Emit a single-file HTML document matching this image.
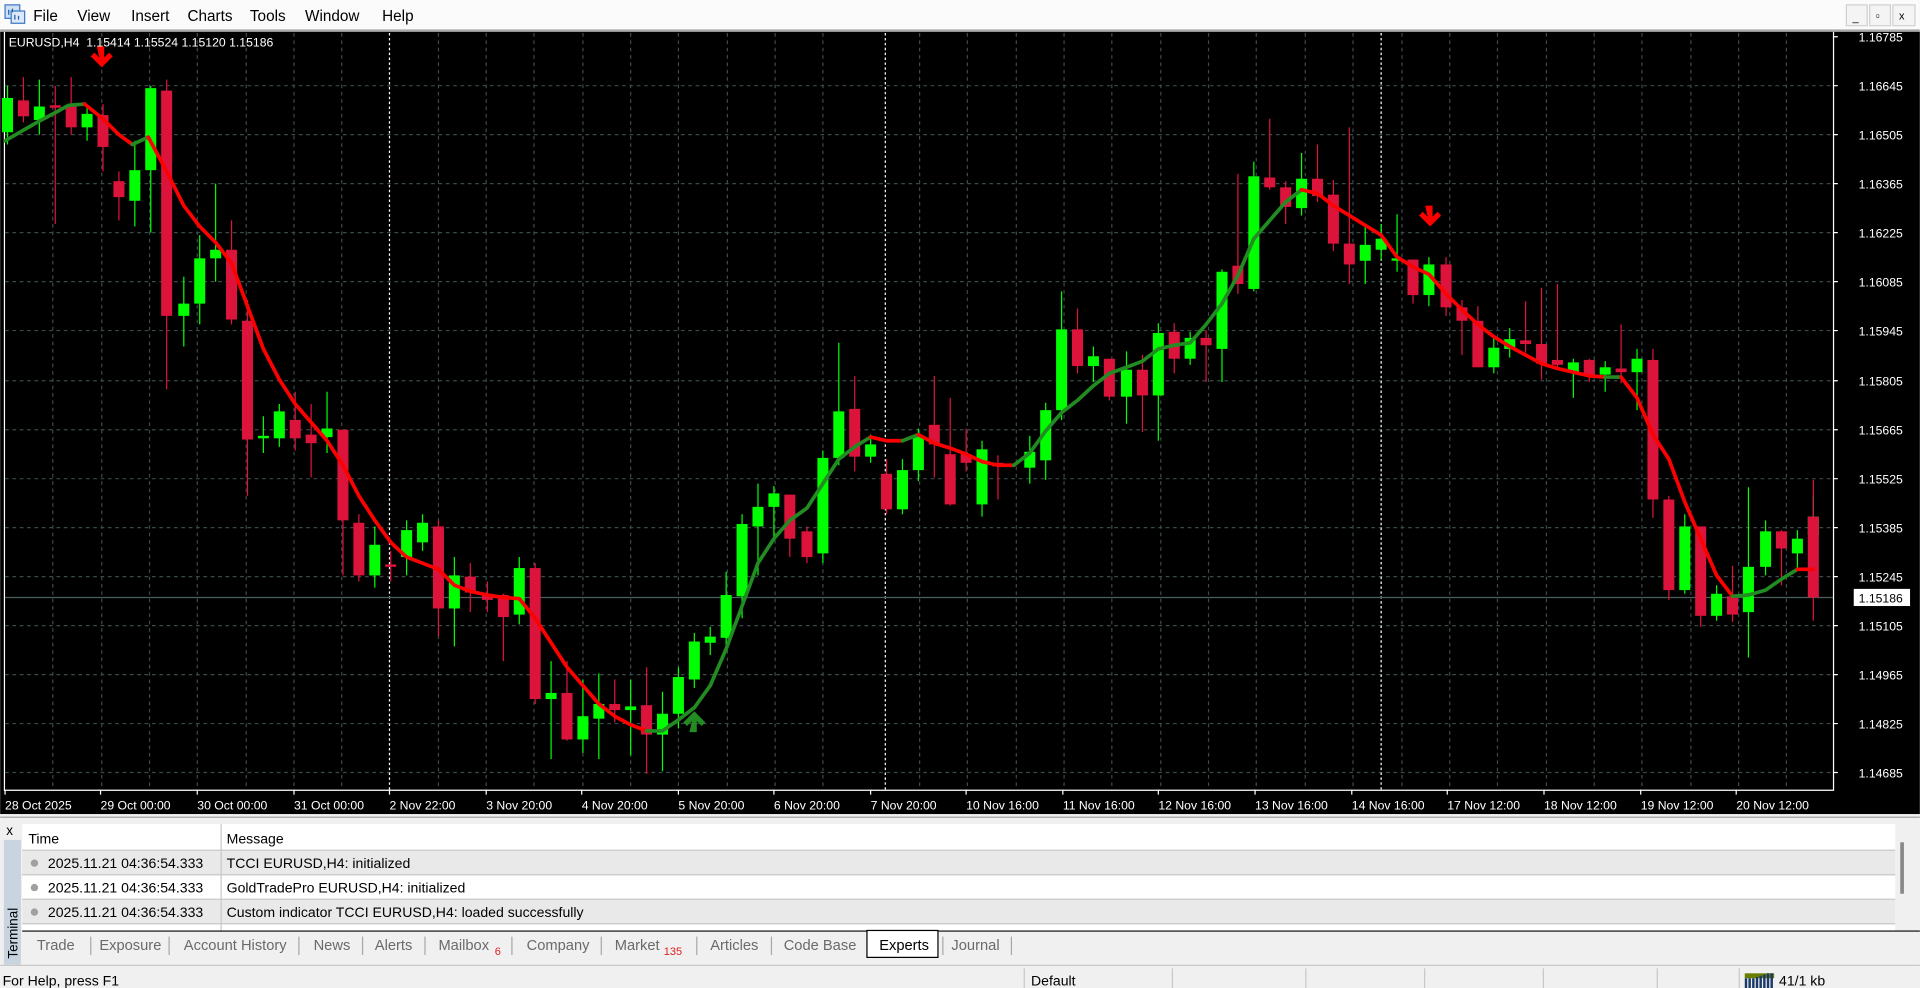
<!DOCTYPE html>
<html><head><meta charset="utf-8"><style>
html,body{margin:0;padding:0;background:#f0f0f0;overflow:hidden}
svg{display:block}
text{font-family:"Liberation Sans",sans-serif}
</style></head><body>
<svg width="1920" height="988" viewBox="0 0 1568 807" xmlns="http://www.w3.org/2000/svg">
<!-- menu bar -->
<rect x="0" y="0" width="1568" height="25" fill="#fbfbfb"/>
<rect x="0" y="24" width="1568" height="2" fill="#a8a8a8"/>
<g>
<rect x="4" y="4" width="12" height="11" fill="#cfe0f4" stroke="#3b78c4" stroke-width="1"/>
<rect x="9" y="9" width="11" height="10" fill="#dbe8f7" stroke="#3b78c4" stroke-width="1"/>
<path d="M7 8v4M10 7v3M12 12v4M15 13v3" stroke="#1f5fae" stroke-width="1"/>
</g>
<g font-size="12.5" fill="#000">
<text x="27" y="17">File</text><text x="63" y="17">View</text><text x="107" y="17">Insert</text>
<text x="153" y="17">Charts</text><text x="204" y="17">Tools</text><text x="249" y="17">Window</text><text x="312" y="17">Help</text>
</g>
<g fill="#f4f4f4" stroke="#d0d0d0">
<rect x="1508" y="4" width="17" height="17"/><rect x="1527" y="4" width="17" height="17"/><rect x="1546" y="4" width="18" height="17"/>
</g>
<g font-size="9" fill="#000"><text x="1513" y="17">_</text><text x="1532" y="16">▫</text><text x="1551" y="16">x</text></g>

<!-- chart -->
<rect x="0" y="26" width="1568" height="639" fill="#000"/>
<!-- grid -->
<g stroke="#3a4a4a" stroke-width="1" stroke-dasharray="3,3">
<path d="M4 70H1497M4 110H1497M4 150H1497M4 190H1497M4 230H1497M4 270H1497M4 311H1497M4 351H1497M4 391H1497M4 431H1497M4 471H1497M4 511H1497M4 551H1497M4 591H1497M4 631H1497"/>
<path d="M43 27V645M83 27V645M122 27V645M161 27V645M201 27V645M240 27V645M279 27V645M358 27V645M397 27V645M436 27V645M476 27V645M515 27V645M554 27V645M594 27V645M633 27V645M672 27V645M751 27V645M790 27V645M830 27V645M869 27V645M908 27V645M948 27V645M987 27V645M1026 27V645M1066 27V645M1105 27V645M1145 27V645M1184 27V645M1223 27V645M1263 27V645M1302 27V645M1341 27V645M1381 27V645M1420 27V645M1459 27V645"/>
</g>
<g stroke="#fff" stroke-width="1" stroke-dasharray="2,2"><path d="M318 27V645M723 27V645M1128 27V645"/></g>
<path d="M4 488H1497" stroke="#4a5e5e" stroke-width="1"/>
<!-- frame -->
<path d="M3.5 26V645.5H1497.5V26" fill="none" stroke="#fff" stroke-width="1"/>
<g stroke="#fff"><path d="M4 645v4M82 645v4M161 645v4M240 645v4M318 645v4M397 645v4M475 645v4M554 645v4M632 645v4M711 645v4M789 645v4M868 645v4M946 645v4M1025 645v4M1104 645v4M1182 645v4M1261 645v4M1340 645v4M1418 645v4"/>
<path d="M1497 30h4M1497 70h4M1497 110h4M1497 150h4M1497 190h4M1497 230h4M1497 270h4M1497 311h4M1497 351h4M1497 391h4M1497 431h4M1497 471h4M1497 511h4M1497 551h4M1497 591h4M1497 631h4"/></g>

<!-- wicks -->
<path stroke="#00ff00" stroke-width="1" d="M6 70V118M32 65V110M71 88V115M110 115V185M123 70V190M150 226V283M163 192V265M176 150V230M215 340V370M228 330V365M267 320V370M306 430V480M332 425V470M345 420V450M371 455V528M424 455V510M450 540V620M476 555V615M489 550V620M515 555V617M541 565V630M554 545V595M567 517V562M580 512V535M593 467V530M606 420V505M619 395V470M632 397V440M672 368V460M685 280V380M711 355V378M737 375V420M750 350V393M802 360V422M841 356V395M854 329V392M867 238V343M893 283V312M920 287V346M946 264V360M972 271V298M998 220V312M1024 132V238M1063 125V176M1115 185V232M1128 183V212M1141 175V222M1167 210V250M1220 275V305M1233 268V292M1285 293V325M1311 295V320M1337 285V335M1376 420V485M1402 478V507M1428 398V537M1442 425V470M1468 433V465M1481 405V445"/>
<path stroke="#dc143c" stroke-width="1" d="M19 63V100M45 70V183M58 63V110M84 85V140M97 140V180M136 65V318M189 180V265M202 245V405M241 320V368M254 330V390M280 351V470M293 420V475M319 450V475M358 425V520M384 460V500M398 475V500M411 485V540M437 460V575M463 540V605M502 555V590M528 545V632M645 404V455M659 430V460M698 307V385M724 375V420M763 307V390M776 325V413M789 350V385M815 372V408M880 252V305M906 294V327M933 290V353M959 264V305M985 270V312M1011 142V240M1037 97V155M1050 148V183M1076 118V165M1089 147V205M1102 104V232M1154 212V248M1181 210V258M1194 245V290M1207 250V300M1246 246V288M1259 235V310M1272 232V300M1298 293V312M1324 265V313M1350 285V423M1363 405V490M1389 430V512M1415 462V508M1455 433V478M1481 392V507"/>
<!-- green bodies -->
<g fill="#00ff00">
<rect x="1.5" y="80" width="9" height="28"/><rect x="27.5" y="87" width="9" height="11"/><rect x="66.5" y="93" width="9" height="11"/><rect x="105.5" y="139" width="9" height="25"/><rect x="118.5" y="72" width="9" height="67"/>
<rect x="145.5" y="248" width="9" height="10"/><rect x="158.5" y="211" width="9" height="37"/><rect x="171.5" y="204" width="9" height="7"/><rect x="210.5" y="356" width="9" height="2"/><rect x="223.5" y="336" width="9" height="22"/>
<rect x="262.5" y="350" width="9" height="7"/><rect x="301.5" y="445" width="9" height="25"/><rect x="327.5" y="433" width="9" height="22"/><rect x="340.5" y="427" width="9" height="16"/><rect x="366.5" y="470" width="9" height="27"/>
<rect x="419.5" y="464" width="9" height="38"/><rect x="445.5" y="566" width="9" height="5"/><rect x="471.5" y="585" width="9" height="19"/><rect x="484.5" y="575" width="9" height="12"/><rect x="510.5" y="577" width="9" height="3"/>
<rect x="536.5" y="583" width="9" height="17"/><rect x="549.5" y="553" width="9" height="30"/><rect x="562.5" y="524" width="9" height="31"/><rect x="575.5" y="520" width="9" height="5"/><rect x="588.5" y="486" width="9" height="35"/>
<rect x="601.5" y="428" width="9" height="59"/><rect x="614.5" y="414" width="9" height="16"/><rect x="627.5" y="403" width="9" height="11"/><rect x="667.5" y="374" width="9" height="78"/><rect x="680.5" y="336" width="9" height="38"/>
<rect x="706.5" y="363" width="9" height="10"/><rect x="732.5" y="384" width="9" height="32"/><rect x="745.5" y="357" width="9" height="27"/><rect x="797.5" y="367" width="9" height="45"/><rect x="836.5" y="369" width="9" height="13"/>
<rect x="849.5" y="335" width="9" height="41"/><rect x="862.5" y="269" width="9" height="66"/><rect x="888.5" y="291" width="9" height="8"/><rect x="915.5" y="302" width="9" height="22"/><rect x="941.5" y="272" width="9" height="51"/>
<rect x="967.5" y="276" width="9" height="17"/><rect x="993.5" y="222" width="9" height="63"/><rect x="1019.5" y="144" width="9" height="92"/><rect x="1058.5" y="146" width="9" height="24"/><rect x="1110.5" y="200" width="9" height="13"/>
<rect x="1123.5" y="195" width="9" height="9"/><rect x="1136.5" y="211" width="9" height="2"/><rect x="1162.5" y="216" width="9" height="25"/><rect x="1215.5" y="284" width="9" height="16"/><rect x="1228.5" y="277" width="9" height="8"/>
<rect x="1280.5" y="296" width="9" height="8"/><rect x="1306.5" y="300" width="9" height="6"/><rect x="1332.5" y="293" width="9" height="11"/><rect x="1371.5" y="430" width="9" height="52"/><rect x="1397.5" y="485" width="9" height="18"/>
<rect x="1423.5" y="463" width="9" height="37"/><rect x="1437.5" y="434" width="9" height="29"/><rect x="1463.5" y="440" width="9" height="12"/><rect x="1476.5" y="422" width="9" height="15"/>
</g>
<!-- red bodies -->
<g fill="#dc143c">
<rect x="14.5" y="82" width="9" height="13"/><rect x="40.5" y="86" width="9" height="2"/><rect x="53.5" y="86" width="9" height="18"/><rect x="79.5" y="94" width="9" height="26"/><rect x="92.5" y="148" width="9" height="13"/>
<rect x="131.5" y="74" width="9" height="184"/><rect x="184.5" y="204" width="9" height="57"/><rect x="197.5" y="262" width="9" height="97"/><rect x="236.5" y="343" width="9" height="15"/><rect x="249.5" y="355" width="9" height="7"/>
<rect x="275.5" y="351" width="9" height="74"/><rect x="288.5" y="427" width="9" height="43"/><rect x="314.5" y="461" width="9" height="2"/><rect x="353.5" y="430" width="9" height="67"/><rect x="379.5" y="471" width="9" height="13"/>
<rect x="393.5" y="485" width="9" height="5"/><rect x="406.5" y="486" width="9" height="18"/><rect x="432.5" y="464" width="9" height="107"/><rect x="458.5" y="566" width="9" height="38"/><rect x="497.5" y="575" width="9" height="5"/>
<rect x="523.5" y="576" width="9" height="24"/><rect x="640.5" y="404" width="9" height="36"/><rect x="654.5" y="434" width="9" height="21"/><rect x="693.5" y="334" width="9" height="39"/><rect x="719.5" y="387" width="9" height="29"/>
<rect x="758.5" y="347" width="9" height="16"/><rect x="771.5" y="371" width="9" height="41"/><rect x="784.5" y="371" width="9" height="7"/><rect x="810.5" y="378" width="9" height="3"/><rect x="875.5" y="269" width="9" height="30"/>
<rect x="901.5" y="293" width="9" height="31"/><rect x="928.5" y="302" width="9" height="21"/><rect x="954.5" y="271" width="9" height="22"/><rect x="980.5" y="276" width="9" height="6"/><rect x="1006.5" y="217" width="9" height="15"/>
<rect x="1032.5" y="145" width="9" height="8"/><rect x="1045.5" y="153" width="9" height="16"/><rect x="1071.5" y="146" width="9" height="14"/><rect x="1084.5" y="159" width="9" height="40"/><rect x="1097.5" y="199" width="9" height="17"/>
<rect x="1149.5" y="212" width="9" height="29"/><rect x="1176.5" y="216" width="9" height="35"/><rect x="1189.5" y="251" width="9" height="11"/><rect x="1202.5" y="262" width="9" height="38"/><rect x="1241.5" y="278" width="9" height="3"/>
<rect x="1254.5" y="281" width="9" height="16"/><rect x="1267.5" y="294" width="9" height="4"/><rect x="1293.5" y="294" width="9" height="12"/><rect x="1319.5" y="301" width="9" height="3"/><rect x="1345.5" y="294" width="9" height="114"/>
<rect x="1358.5" y="408" width="9" height="74"/><rect x="1384.5" y="430" width="9" height="73"/><rect x="1410.5" y="487" width="9" height="15"/><rect x="1450.5" y="434" width="9" height="14"/><rect x="1476.5" y="422" width="9" height="66"/>
</g>
<!-- MA line -->
<g fill="none" stroke-width="3" stroke-linejoin="round" stroke-linecap="round">
<polyline stroke="#228b22" points="4,115 30,100 45,92 56,86 69,85"/>
<polyline stroke="#ff0000" points="69,85 84,97 97,110 108,118"/>
<polyline stroke="#228b22" points="108,118 121,112"/>
<polyline stroke="#ff0000" points="121,112 136,140 150,168 163,185 176,198 189,215 202,250 215,285 228,310 241,330 254,345 267,360 280,380 293,405 306,425 319,443 332,455 345,460 358,465 371,478 384,483 398,486 411,488 424,489 437,505 450,525 463,545 476,560 489,575 502,585 515,592 528,597"/>
<polyline stroke="#228b22" points="528,597 541,597 554,588 567,578 580,560 593,530 606,495 619,460 632,440 645,425 659,415 672,395 685,375 698,365 711,357"/>
<polyline stroke="#ff0000" points="711,357 724,360 737,360"/>
<polyline stroke="#228b22" points="737,360 750,355"/>
<polyline stroke="#ff0000" points="750,355 763,362 776,366 789,371 802,377 815,380 828,380"/>
<polyline stroke="#228b22" points="828,380 841,370 854,352 867,337 880,327 893,315 906,305 920,300 933,295 946,285 959,282 972,280 985,265 998,248 1011,225 1024,195 1037,180 1050,165 1063,155"/>
<polyline stroke="#ff0000" points="1063,155 1076,158 1089,168 1102,176 1115,184 1128,192 1141,210 1154,218 1167,224 1181,240 1194,253 1207,265 1220,275 1233,283 1246,290 1259,297 1272,301 1285,304 1298,307 1311,308"/>
<polyline stroke="#228b22" points="1311,308 1324,308"/>
<polyline stroke="#ff0000" points="1324,308 1337,325 1350,355 1363,375 1376,410 1389,440 1402,470 1415,487"/>
<polyline stroke="#228b22" points="1415,487 1428,486 1442,482 1455,473 1468,465"/>
<polyline stroke="#ff0000" points="1468,465 1481,465"/>
</g>
<!-- arrows -->
<path d="M79 38h6v9l4-4 3 3-9 9-9-9 3-3 4 4z" fill="#ff0000"/>
<path d="M1164 168h6v9l4-4 3 3-9 9-9-9 3-3 4 4z" fill="#ff0000"/>
<path d="M563 598h6v-9l4 4 3-3-9-9-9 9 3 3 4-4z" fill="#228b22"/>
<!-- chart texts -->
<text x="7" y="38" font-size="10" fill="#fff" xml:space="preserve">EURUSD,H4  1.15414 1.15524 1.15120 1.15186</text>
<g font-size="10" fill="#fff">
<text x="1518" y="34">1.16785</text><text x="1518" y="74">1.16645</text><text x="1518" y="114">1.16505</text><text x="1518" y="154">1.16365</text>
<text x="1518" y="194">1.16225</text><text x="1518" y="234">1.16085</text><text x="1518" y="274">1.15945</text><text x="1518" y="315">1.15805</text>
<text x="1518" y="355">1.15665</text><text x="1518" y="395">1.15525</text><text x="1518" y="435">1.15385</text><text x="1518" y="475">1.15245</text>
<text x="1518" y="515">1.15105</text><text x="1518" y="555">1.14965</text><text x="1518" y="595">1.14825</text><text x="1518" y="635">1.14685</text>
</g>
<rect x="1514" y="481" width="46" height="14" fill="#fff"/>
<text x="1518" y="492" font-size="10" fill="#000">1.15186</text>
<g font-size="10" fill="#fff">
<text x="4" y="661">28 Oct 2025</text><text x="82" y="661">29 Oct 00:00</text><text x="161" y="661">30 Oct 00:00</text><text x="240" y="661">31 Oct 00:00</text>
<text x="318" y="661">2 Nov 22:00</text><text x="397" y="661">3 Nov 20:00</text><text x="475" y="661">4 Nov 20:00</text><text x="554" y="661">5 Nov 20:00</text>
<text x="632" y="661">6 Nov 20:00</text><text x="711" y="661">7 Nov 20:00</text><text x="789" y="661">10 Nov 16:00</text><text x="868" y="661">11 Nov 16:00</text>
<text x="946" y="661">12 Nov 16:00</text><text x="1025" y="661">13 Nov 16:00</text><text x="1104" y="661">14 Nov 16:00</text><text x="1182" y="661">17 Nov 12:00</text>
<text x="1261" y="661">18 Nov 12:00</text><text x="1340" y="661">19 Nov 12:00</text><text x="1418" y="661">20 Nov 12:00</text>
</g>

<!-- terminal -->
<rect x="0" y="665" width="1568" height="125" fill="#f0f0f0"/>
<rect x="0" y="667" width="1568" height="1" fill="#a0a0a0"/>
<rect x="3" y="686" width="14" height="102" fill="#c8d4e0"/>
<text x="5" y="682" font-size="11" fill="#000">x</text>
<text transform="translate(14,783) rotate(-90)" font-size="11" fill="#000">Terminal</text>
<rect x="18" y="673" width="1530" height="87" fill="#fff"/>
<rect x="18" y="695" width="1530" height="20" fill="#e9e9e9"/>
<rect x="18" y="735" width="1530" height="20" fill="#e9e9e9"/>
<g stroke="#c8c8c8"><path d="M18 694.5H1548M18 714.5H1548M18 734.5H1548M18 754.5H1548M180.5 673V760"/></g>
<rect x="1548" y="673" width="20" height="87" fill="#f0f0f0"/>
<rect x="1552" y="688" width="3" height="42" fill="#888"/>
<g font-size="11.5" fill="#000">
<text x="23" y="689">Time</text><text x="185" y="689">Message</text>
<text x="39" y="709">2025.11.21 04:36:54.333</text><text x="185" y="709">TCCI EURUSD,H4: initialized</text>
<text x="39" y="729">2025.11.21 04:36:54.333</text><text x="185" y="729">GoldTradePro EURUSD,H4: initialized</text>
<text x="39" y="749">2025.11.21 04:36:54.333</text><text x="185" y="749">Custom indicator TCCI EURUSD,H4: loaded successfully</text>
</g>
<g fill="#a0a0a0"><circle cx="28" cy="705" r="3"/><circle cx="28" cy="725" r="3"/><circle cx="28" cy="745" r="3"/></g>
<!-- tabs -->
<path d="M18 760.5H1568" stroke="#000" stroke-width="1"/>
<rect x="708" y="760" width="58" height="22" fill="#fff" stroke="#000" stroke-width="1"/>
<g stroke="#a8a8a8"><path d="M74 765v15M138 765v15M244 765v15M296 765v15M347 765v15M418 765v15M491 765v15M569 765v15M630 765v15M770 765v15M826 765v15"/></g>
<g font-size="12" fill="#6a6a6a">
<text x="30" y="776">Trade</text><text x="81" y="776">Exposure</text><text x="150" y="776">Account History</text><text x="256" y="776">News</text>
<text x="306" y="776">Alerts</text><text x="358" y="776">Mailbox</text><text x="430" y="776">Company</text><text x="502" y="776">Market</text>
<text x="580" y="776">Articles</text><text x="640" y="776">Code Base</text><text x="777" y="776">Journal</text>
</g>
<text x="718" y="776" font-size="12" fill="#000">Experts</text>
<g font-size="9" fill="#e02020"><text x="404" y="780">6</text><text x="542" y="780">135</text></g>
<!-- status bar -->
<rect x="0" y="788" width="1568" height="19" fill="#f0f0f0"/>
<rect x="0" y="788" width="1568" height="1" fill="#c8c8c8"/>
<g stroke="#c8c8c8"><path d="M836.5 791v16M957.5 791v16M1066.5 791v16M1163.5 791v16M1260.5 791v16M1353.5 791v16M1420.5 791v16"/></g>
<g font-size="11.5" fill="#000"><text x="2" y="805">For Help, press F1</text><text x="842" y="805">Default</text><text x="1453" y="805">41/1 kb</text></g>
<g><rect x="1425" y="795" width="24" height="4" fill="#6b7d00"/>
<path d="M1426 807v-8M1429 807v-8M1432 807v-8M1435 807v-9M1438 807v-10M1441 807v-11M1444 807v-12M1447 807v-12" stroke="#1a3a6a" stroke-width="2"/></g>
</svg>
</body></html>
